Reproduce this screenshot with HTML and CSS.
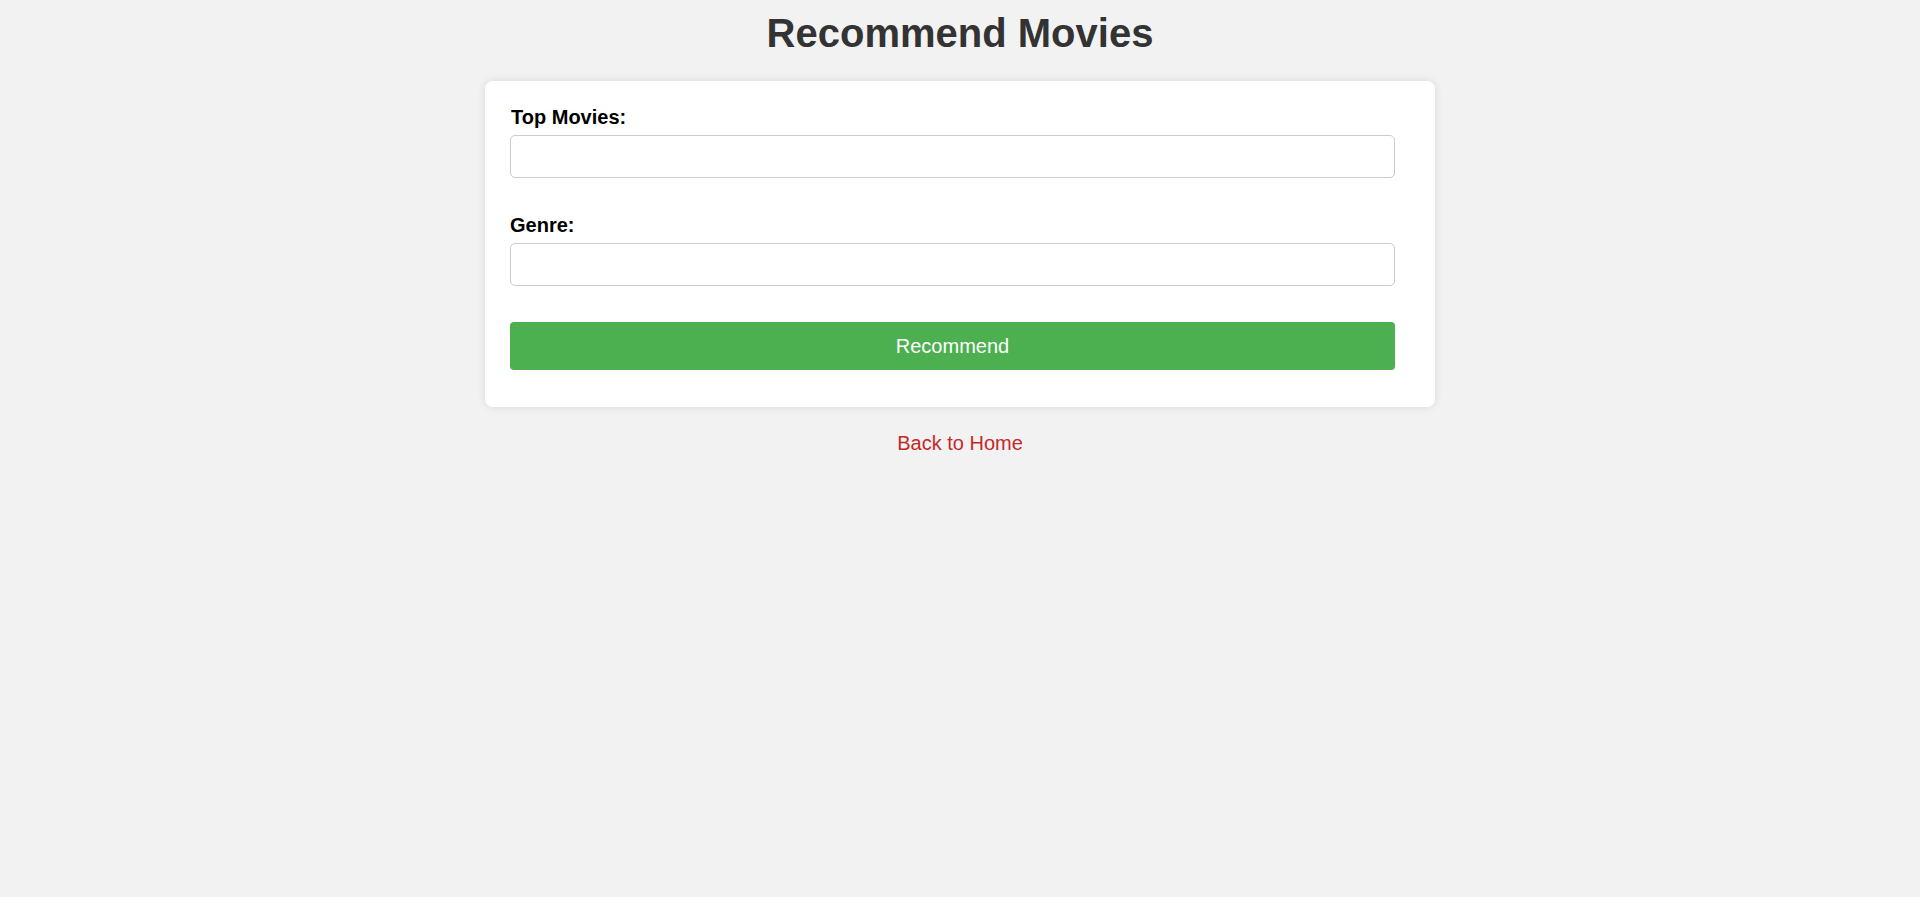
FILE: index.html
```html
<!DOCTYPE html>
<html lang="en">
<head>
<meta charset="utf-8">
<title>Recommend Movies</title>
<link rel="stylesheet" href="styles.css">
</head>
<body>
<h1 class="title">Recommend Movies</h1>
<form class="card">
  <div class="field">
    <label class="label label-first" for="top">Top Movies:</label>
    <input class="input" id="top" type="text">
  </div>
  <div class="field">
    <label class="label" for="genre">Genre:</label>
    <input class="input" id="genre" type="text">
  </div>
  <button class="btn" type="button">Recommend</button>
</form>
<div class="back"><a class="back-link" href="#">Back to Home</a></div>
</body>
</html>
```
FILE: styles.css
```css
html, body {
  margin: 0;
  padding: 0;
  background: #f2f2f2;
  font-family: "Liberation Sans", Arial, sans-serif;
}
.title {
  margin: 10px 0 25px;
  font-size: 40px;
  line-height: 46px;
  font-weight: bold;
  color: #333;
  text-align: center;
}
.card {
  box-sizing: border-box;
  width: 950px;
  margin: 0 auto;
  padding: 25px 40px 37px 25px;
  background: #fff;
  border-radius: 8px;
  box-shadow: 0 0 10px rgba(0, 0, 0, 0.1);
  display: flex;
  flex-direction: column;
}
.field {
  display: flex;
  flex-direction: column;
  margin-bottom: 36px;
}
.label {
  font-size: 20px;
  line-height: 23px;
  font-weight: bold;
  color: #000;
  margin: 0 0 6px 0;
}
.label-first {
  margin-left: 1px;
}
.input {
  box-sizing: border-box;
  height: 43px;
  width: 100%;
  border: 1px solid #ccc;
  border-radius: 5px;
  padding: 0 10px;
  font-size: 16px;
  font-family: inherit;
  background: #fff;
  margin: 0;
}
.btn {
  box-sizing: border-box;
  height: 48px;
  width: 100%;
  border: none;
  border-radius: 4px;
  background: #4caf50;
  color: #fff;
  font-size: 20px;
  font-family: inherit;
  margin: 0;
  padding: 0;
}
.back {
  text-align: center;
  margin-top: 25px;
  font-size: 20px;
  line-height: 23px;
}
.back-link {
  color: #c62828;
  text-decoration: none;
}
```
